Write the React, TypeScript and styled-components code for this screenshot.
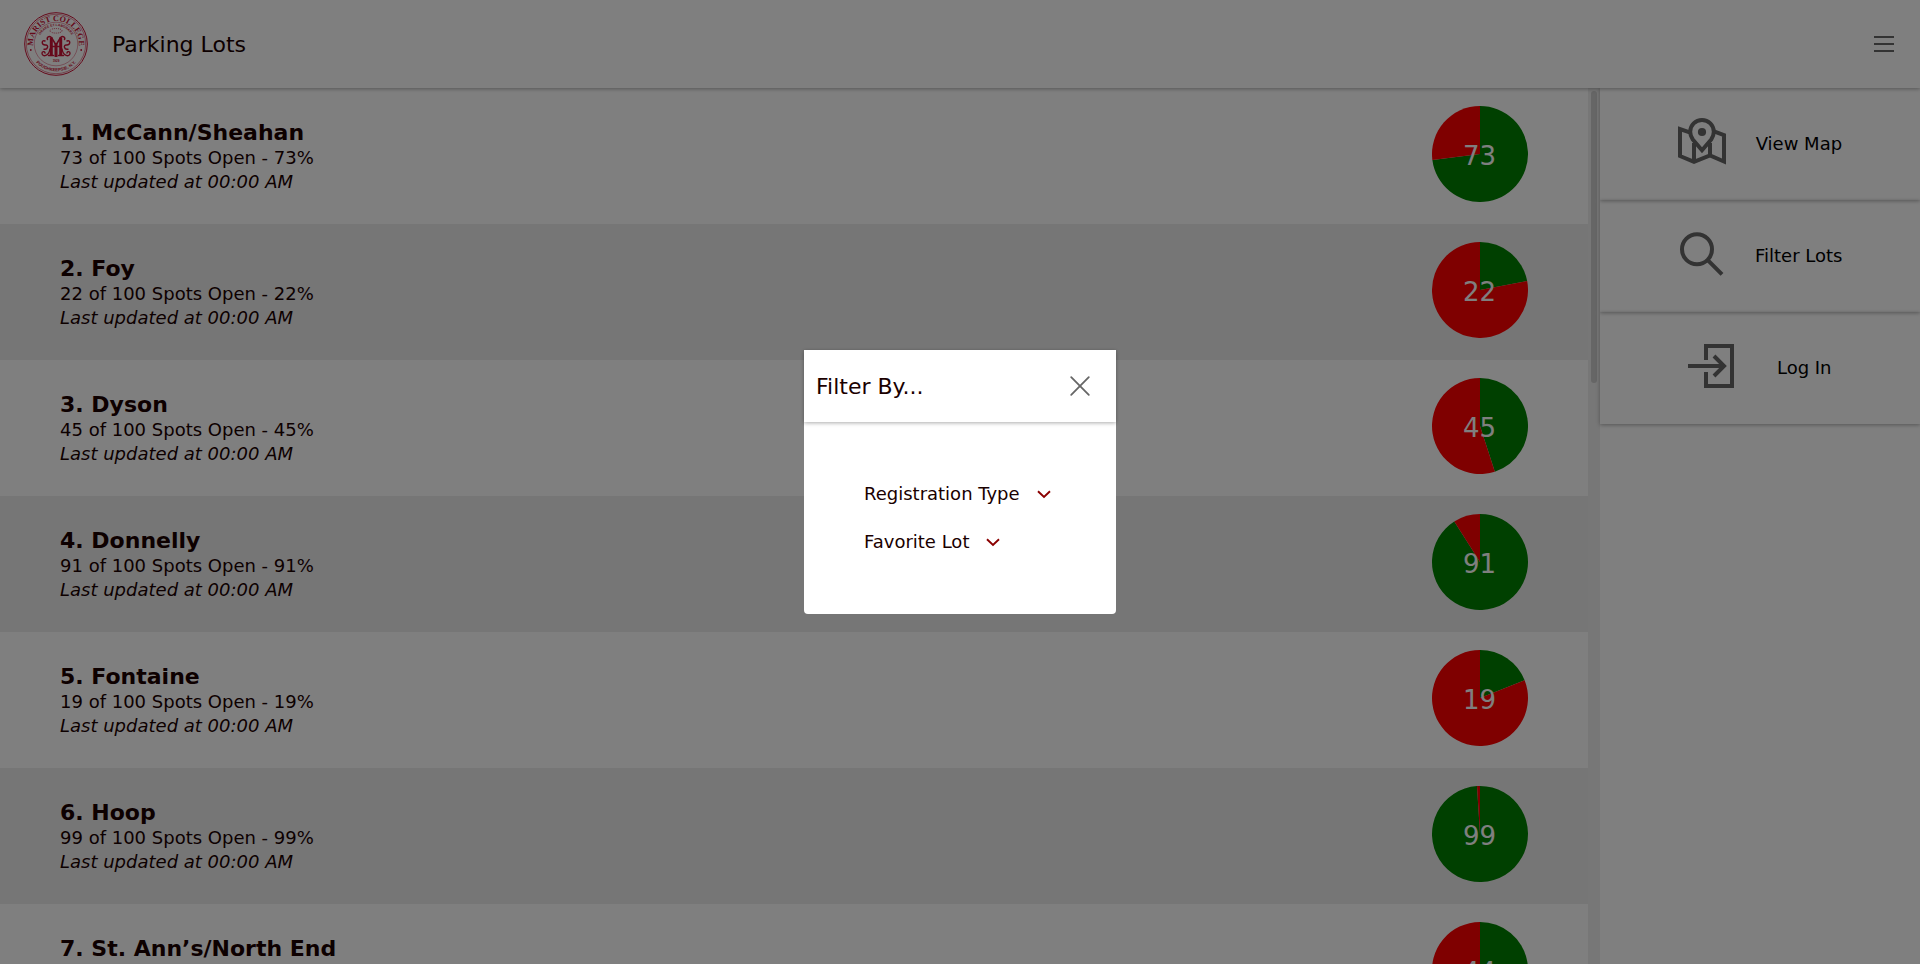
import React from "react";
import styled, { createGlobalStyle } from "styled-components";

const GlobalStyle = createGlobalStyle`
  *, *::before, *::after { box-sizing: border-box; }
  html, body { margin: 0; padding: 0; }
  body {
    background: #fff;
    color: #1a0000;
    font-family: "DejaVu Sans", sans-serif;
    font-size: 18px;
    overflow: hidden;
  }
  h1, h2, h3, p { margin: 0; }
`;

const Page = styled.div`
  display: flex;
  flex-direction: column;
  height: 100vh;
`;

const Header = styled.header`
  display: flex;
  align-items: center;
  flex: none;
  height: 88px;
  padding: 0 24px;
  background: #fff;
  box-shadow: 0 1px 4px rgba(0, 0, 0, 0.33);
  z-index: 2;
`;

const Title = styled.h1`
  flex: 1;
  margin-left: 24px;
  font-size: 22px;
  font-weight: 400;
`;

const IconButton = styled.button`
  display: flex;
  padding: 0;
  border: 0;
  background: none;
  color: #666;
`;

const Content = styled.div`
  display: flex;
  flex: 1;
  min-height: 0;
`;

const LotScroller = styled.main`
  display: flex;
  flex: 1;
  min-width: 0;
`;

const LotList = styled.div`
  flex: 1;
  overflow: hidden;
`;

const ScrollTrack = styled.div`
  width: 12px;
  padding: 3px;
  background: #eee;
`;

const ScrollThumb = styled.div`
  height: 292px;
  border-radius: 3px;
  background: #ccc;
`;

const LotRow = styled.article<{ $shaded: boolean }>`
  display: flex;
  justify-content: space-between;
  height: 136px;
  padding: 18px 60px;
  background: ${({ $shaded }) => ($shaded ? "#ececec" : "#fff")};
`;

const LotInfo = styled.div`
  padding-top: 13px;
  line-height: 24px;
`;

const LotName = styled.h2`
  margin-bottom: -1px;
  font-size: 22px;
  font-weight: 700;
  line-height: 28px;
`;

const Updated = styled.p`
  font-style: italic;
`;

const PieSvg = styled.svg`
  width: 96px;
  height: 96px;

  text {
    fill: #fff;
    font-size: 26px;
    text-anchor: middle;
  }
`;

const Sidebar = styled.nav`
  width: 320px;
  background: #fff;
`;

const SideItem = styled.a`
  display: flex;
  align-items: center;
  justify-content: space-evenly;
  height: 112px;
  padding: 0 48px;
  color: #000;
  box-shadow: 0 1px 4px rgba(0, 0, 0, 0.33);
`;

const SideLabel = styled.span`
  padding-bottom: 2px;
`;

const SideIcon = styled.svg`
  flex: none;
  width: 48px;
  height: 48px;
  margin-bottom: 4px;
  overflow: visible;
  fill: none;
  stroke: #666;
  stroke-width: 4;
`;

const Backdrop = styled.div`
  position: fixed;
  inset: 0;
  z-index: 10;
  display: flex;
  align-items: center;
  justify-content: center;
  background: rgba(0, 0, 0, 0.5);
`;

const Dialog = styled.section`
  width: 312px;
  background: #fff;
  border-radius: 0 0 4px 4px;
`;

const DialogHeader = styled.header`
  display: flex;
  align-items: center;
  justify-content: space-between;
  height: 72px;
  padding: 0 24px 0 12px;
  box-shadow: 0 1px 4px rgba(0, 0, 0, 0.33);
`;

const DialogTitle = styled.h3`
  font-size: 22px;
  font-weight: 400;
`;

const DialogBody = styled.div`
  padding: 48px 60px;
`;

const FilterOption = styled.div`
  display: flex;
  align-items: center;
  gap: 12px;
  height: 48px;
  padding-bottom: 1px;
`;

const Seal = () => (
  <svg width="64" height="64" viewBox="0 0 64 64" fill="none" stroke="#cc1236">
    <defs>
      <path id="seal-top" d="M9.2 34A22.9 22.9 0 1 1 54.8 34" />
      <path id="seal-motto" d="M15.2 25.5A18 18 0 0 1 48.8 25.5" />
      <path id="seal-bottom" d="M7.5 44A27.3 27.3 0 0 0 56.5 44" />
    </defs>
    <circle cx="32" cy="32" r="31.3" strokeWidth="1" />
    <circle cx="32" cy="32" r="29.7" strokeWidth="0.5" />
    <circle cx="32" cy="32" r="21.8" strokeWidth="0.5" opacity="0.8" />
    <g
      fill="#cc1236"
      stroke="none"
      fontFamily="Liberation Sans, sans-serif"
      fontWeight="700"
      textAnchor="middle"
    >
      <text fontSize="8.2" fontFamily="Liberation Serif, serif">
        <textPath href="#seal-top" startOffset="50%">MARIST COLLEGE</textPath>
      </text>
      <text fontSize="3.4">
        <textPath href="#seal-motto" startOffset="50%">ORARE ET LABORARE</textPath>
      </text>
      <text fontSize="4.3">
        <textPath href="#seal-bottom" startOffset="50%">POUGHKEEPSIE, N.Y.</textPath>
      </text>
      <text x="32" y="50.3" fontSize="3">1929</text>
      <circle cx="6.8" cy="38" r="0.9" />
      <circle cx="57.2" cy="38" r="0.9" />
    </g>
    <ellipse cx="32" cy="18.8" rx="6" ry="2.3" strokeWidth="0.9" strokeDasharray="0.9 1.1" />
    <g strokeLinecap="round">
      <path strokeWidth="3" strokeLinecap="butt" d="M27.3 25.5V43.5M32 31V45M36.7 25.5V43.5" />
      <path
        strokeWidth="1.5"
        d="M32 33L27.5 25.5C25 23.5 22.5 25 23.5 27.5M32 33L36.5 25.5C39 23.5 41.5 25 40.5 27.5M24.5 43.5H29.5M34.5 43.5H39.5M27.5 34.5H36.5"
      />
      <path
        strokeWidth="1.4"
        d="M21 29C17 27.5 17.5 33.5 21.5 33C25 32.5 24 38 20 37.2M26 37C25 44 18.5 45.5 18 41.5C17.8 39.2 20.8 39 21 41M43 29C47 27.5 46.5 33.5 42.5 33C39 32.5 40 38 44 37.2M38 37C39 44 45.5 45.5 46 41.5C46.2 39.2 43.2 39 43 41"
      />
    </g>
  </svg>
);

const MenuIcon = () => (
  <svg width="24" height="24" viewBox="0 0 24 24" stroke="currentColor" strokeWidth="2">
    <path d="M2 5H22M2 12H22M2 19H22" />
  </svg>
);

const CloseIcon = () => (
  <svg width="24" height="24" viewBox="0 0 24 24" stroke="currentColor" strokeWidth="1.8" strokeLinecap="round">
    <path d="M3.2 3.2L20.8 20.8M20.8 3.2L3.2 20.8" />
  </svg>
);

const Chevron = () => (
  <svg width="24" height="24" viewBox="0 0 24 24" fill="none" stroke="#8b0000" strokeWidth="1.9">
    <path d="M6 9.2L12 15L18 9.2" />
  </svg>
);

const MapIcon = () => (
  <SideIcon viewBox="0 0 48 48">
    <path d="M12.4 14.7L2 11.1V38L16 43.8L32 37.5L46 43.5V17.2L36 13.4M16 25V43.8M32 25V37.5" />
    <path d="M24 32.2L14.8 21.5C12.9 18.8 12.2 16.5 12.2 13.8A11.8 11.8 0 0 1 35.8 13.8C35.8 16.5 35.1 18.8 33.2 21.5Z" />
    <circle cx="24" cy="14" r="4.1" fill="#666" stroke="none" />
  </SideIcon>
);

const SearchIcon = () => (
  <SideIcon viewBox="0 0 48 48">
    <circle cx="19" cy="19.3" r="15" />
    <path d="M29.5 29.8L44 44.3" />
  </SideIcon>
);

const LoginIcon = () => (
  <SideIcon viewBox="0 0 48 48">
    <path d="M18 18V4H44V44H18V30M0 24H37M26 14L36 24L26 34" />
  </SideIcon>
);

const Pie = ({ value }: { value: number }) => {
  const angle = (value / 100) * 2 * Math.PI;
  const x = 48 + 48 * Math.sin(angle);
  const y = 48 - 48 * Math.cos(angle);
  const large = value > 50 ? 1 : 0;
  return (
    <PieSvg viewBox="0 0 96 96">
      <path fill="#008000" d={`M48 48V0A48 48 0 ${large} 1 ${x} ${y}Z`} />
      <path fill="#f00" d={`M48 48L${x} ${y}A48 48 0 ${1 - large} 1 48 0Z`} />
      <text x="47.5" y="59">{value}</text>
    </PieSvg>
  );
};

const lots = [
  { name: "McCann/Sheahan", open: 73 },
  { name: "Foy", open: 22 },
  { name: "Dyson", open: 45 },
  { name: "Donnelly", open: 91 },
  { name: "Fontaine", open: 19 },
  { name: "Hoop", open: 99 },
  { name: "St. Ann’s/North End", open: 44 },
];

const menu = [
  { label: "View Map", Icon: MapIcon },
  { label: "Filter Lots", Icon: SearchIcon },
  { label: "Log In", Icon: LoginIcon },
];

export default function App() {
  return (
    <>
      <GlobalStyle />
      <Page>
        <Header>
          <Seal />
          <Title>Parking Lots</Title>
          <IconButton aria-label="Menu">
            <MenuIcon />
          </IconButton>
        </Header>
        <Content>
          <LotScroller>
            <LotList>
              {lots.map((lot, i) => (
                <LotRow key={lot.name} $shaded={i % 2 === 1}>
                  <LotInfo>
                    <LotName>
                      {i + 1}. {lot.name}
                    </LotName>
                    <p>
                      {lot.open} of 100 Spots Open - {lot.open}%
                    </p>
                    <Updated>Last updated at 00:00 AM</Updated>
                  </LotInfo>
                  <Pie value={lot.open} />
                </LotRow>
              ))}
            </LotList>
            <ScrollTrack>
              <ScrollThumb />
            </ScrollTrack>
          </LotScroller>
          <Sidebar>
            {menu.map(({ label, Icon }) => (
              <SideItem key={label}>
                <Icon />
                <SideLabel>{label}</SideLabel>
              </SideItem>
            ))}
          </Sidebar>
        </Content>
      </Page>
      <Backdrop>
        <Dialog role="dialog" aria-label="Filter lots">
          <DialogHeader>
            <DialogTitle>Filter By...</DialogTitle>
            <IconButton aria-label="Close">
              <CloseIcon />
            </IconButton>
          </DialogHeader>
          <DialogBody>
            <FilterOption>
              Registration Type
              <Chevron />
            </FilterOption>
            <FilterOption>
              Favorite Lot
              <Chevron />
            </FilterOption>
          </DialogBody>
        </Dialog>
      </Backdrop>
    </>
  );
}
